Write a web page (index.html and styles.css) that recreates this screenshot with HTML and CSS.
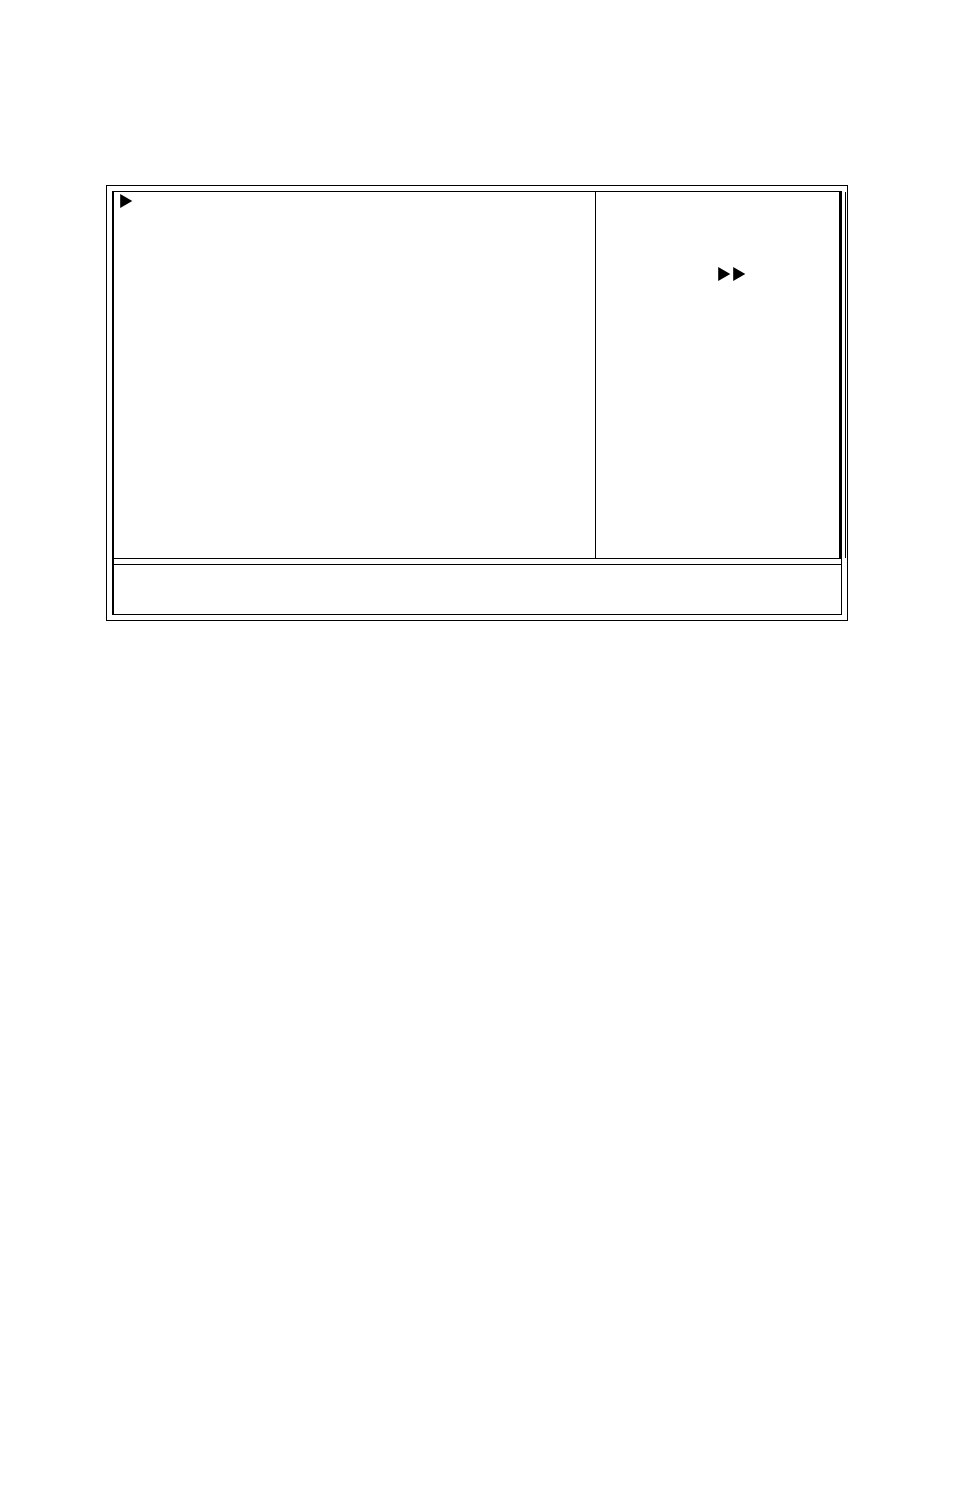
FILE: index.html
```
<!DOCTYPE html>
<html lang="en">
<head>
<meta charset="UTF-8" />
<meta name="viewport" content="width=device-width, initial-scale=1" />
<title>Setup Screen</title>
<link rel="stylesheet" href="styles.css">
</head>
<body>
  <main class="screen">
    <div class="frame">
      <div class="panels">
        <section class="menu" aria-label="Menu">
          <svg class="arrow" viewBox="0 0 13 14" aria-hidden="true"><path d="M0.2 0L12.3 7L0.2 14Z" /></svg>
        </section>
        <section class="help" aria-label="Item help">
          <svg class="arrow" viewBox="0 0 13 14" aria-hidden="true"><path d="M0.2 0L12.3 7L0.2 14Z" /></svg>
          <svg class="arrow" viewBox="0 0 13 14" aria-hidden="true"><path d="M0.2 0L12.3 7L0.2 14Z" /></svg>
        </section>
      </div>
      <footer class="keys"></footer>
    </div>
  </main>
</body>
</html>
```
FILE: styles.css
```
*, *::before, *::after {
  box-sizing: border-box;
}
body {
  margin: 0;
  padding: 185px 106px;
  background: #fff;
  color: #000;
  font-family: "Liberation Sans", Arial, sans-serif;
}

/* Double frame */
.screen {
  border: 1px solid #000;
  padding: 5px;
}
.frame {
  border: 1px solid #000;
  border-left-width: 2px;
}

.panels {
  position: relative;
  display: grid;
  grid-template-columns: 482fr 243fr;
  min-height: 367px;
  border-right: 2px solid #000;
  border-bottom: 1px solid #000;
}
/* Thin line between the two frames, beside the panels only */
.panels::after {
  content: "";
  position: absolute;
  top: 0;
  bottom: 0;
  right: -7px;
  width: 1px;
  background: #000;
}
.menu {
  padding: 2px 6px;
  border-right: 1px solid #000;
}
.help {
  display: flex;
  align-items: flex-start;
  gap: 2px;
  padding-top: 75px;
  padding-left: 122px;
}
.keys {
  margin-top: 5px;
  min-height: 50px;
  border-top: 1px solid #000;
}

.arrow {
  display: block;
  flex: none;
  width: 13px;
  height: 14px;
  fill: currentColor;
}
```
